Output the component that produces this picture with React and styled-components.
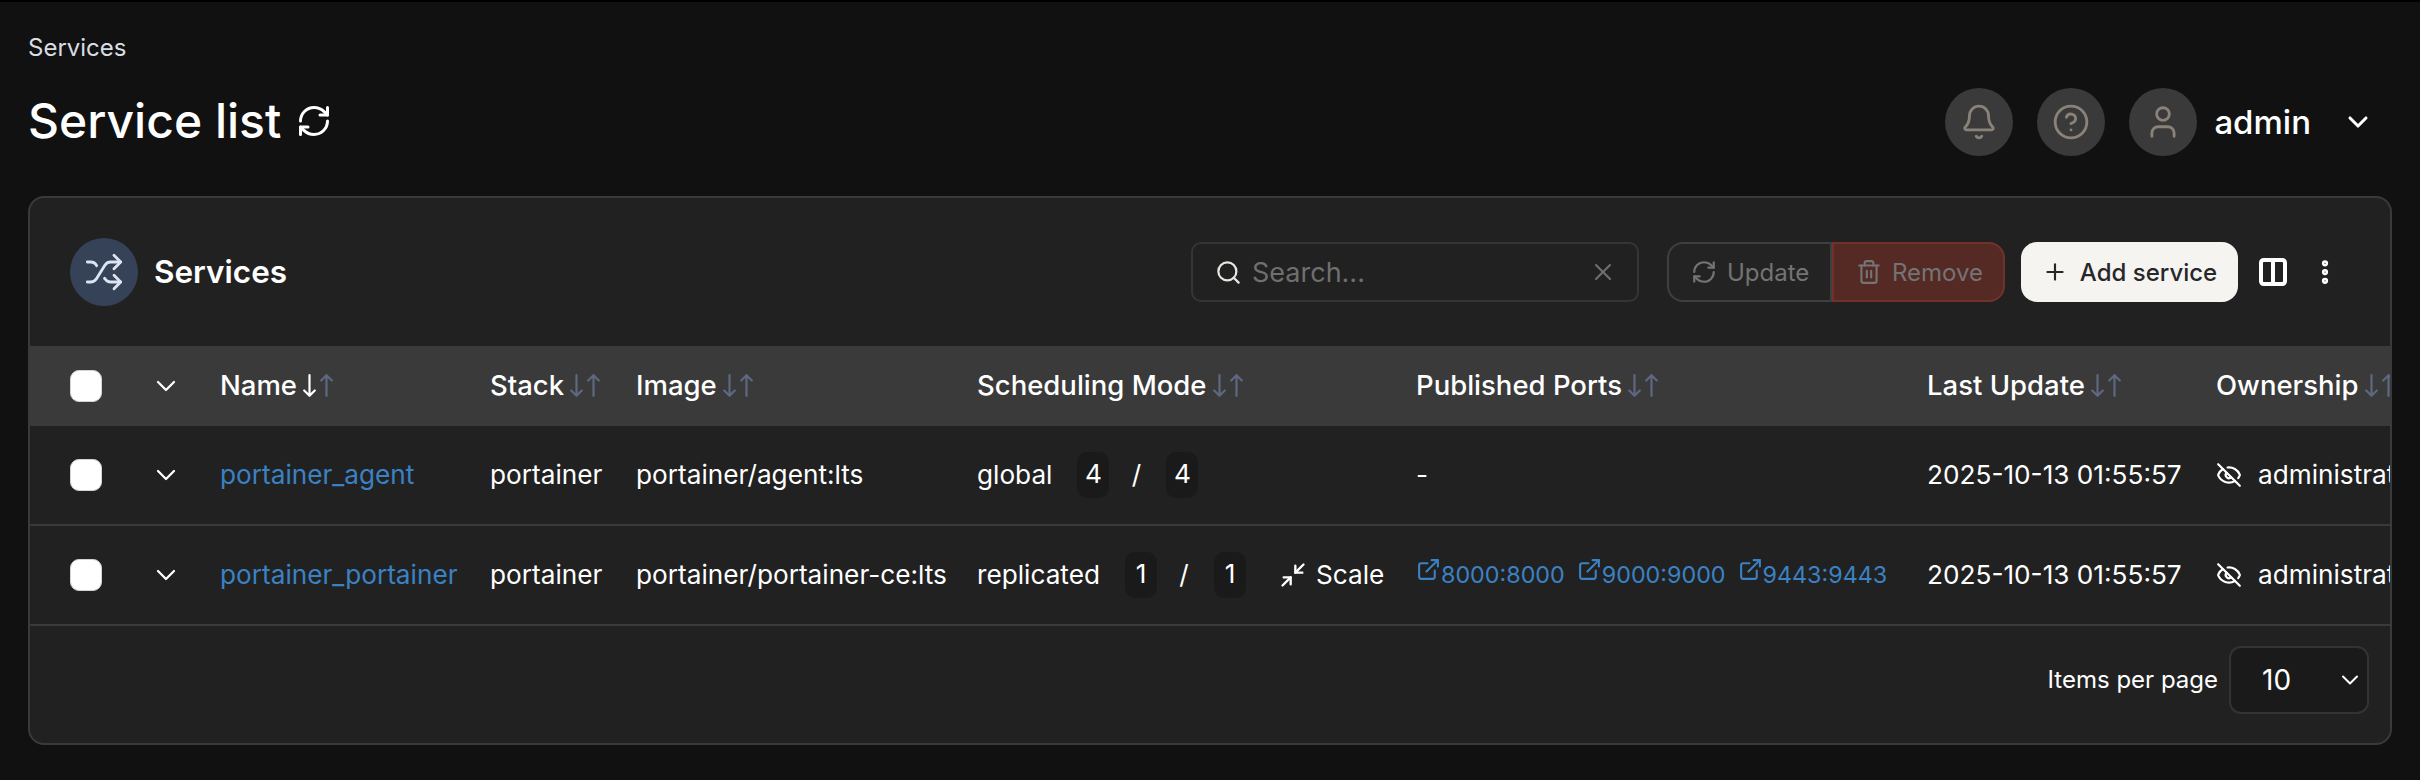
import React from 'react';
import styled, { createGlobalStyle } from 'styled-components';
import {
  Bell, ChevronDown, CircleHelp, Columns2, EllipsisVertical, ExternalLink,
  EyeOff, Minimize2, Plus, RefreshCw, Search, Shuffle, Trash2, User, X,
} from 'lucide-react';

const GlobalStyle = createGlobalStyle`
  html, body { margin: 0; padding: 0; background: #111111; }
  * { box-sizing: border-box; }
  body { font-family: Inter, "Noto Sans", sans-serif; color: #fff; -webkit-font-smoothing: antialiased; }
`;

const Page = styled.div`
  width: 2420px;
  height: 780px;
  overflow: hidden;
  background: #111111;
  border-top: 2px solid #000;
  padding: 0 28px;
`;

const TopBar = styled.header`
  display: flex;
  justify-content: space-between;
  height: 194px;
`;

const TitleBlock = styled.div`
  padding-top: 33px;
`;

const Breadcrumb = styled.div`
  font-size: 24px;
  line-height: 26px;
  color: #d9dde3;
`;

const TitleRow = styled.div`
  display: flex;
  align-items: center;
  gap: 15px;
  margin-top: 33px;
  height: 54px;
`;

const PageTitle = styled.h1`
  margin: 0;
  font-size: 48px;
  line-height: 54px;
  font-weight: 500;
`;

const UserBar = styled.div`
  display: flex;
  align-items: center;
  height: 68px;
  margin-top: 86px;
  padding-right: 18px;
`;

const RoundButton = styled.div`
  width: 68px;
  height: 68px;
  border-radius: 50%;
  background: #3a3a3a;
  color: #8a8278;
  display: flex;
  align-items: center;
  justify-content: center;
  margin-right: ${(p) => p.$gap}px;
`;

const UserName = styled.span`
  font-size: 33px;
  font-weight: 500;
  margin-right: 31px;
`;

const Card = styled.section`
  height: 549px;
  background: #212121;
  border: 2px solid #3a3a3a;
  border-radius: 16px;
  overflow: hidden;
`;

const CardHeader = styled.div`
  height: 148px;
  display: flex;
  align-items: center;
  padding: 0 50px 0 40px;
`;

const CardIcon = styled.div`
  width: 68px;
  height: 68px;
  border-radius: 50%;
  background: #354258;
  color: #dbe4f0;
  display: flex;
  align-items: center;
  justify-content: center;
`;

const CardTitle = styled.h2`
  margin: 0 0 2px 16px;
  font-size: 31.5px;
  font-weight: 600;
`;

const Actions = styled.div`
  margin-left: auto;
  display: flex;
  align-items: center;
`;

const SearchBox = styled.div`
  width: 448px;
  height: 60px;
  border: 2px solid #353535;
  border-radius: 10px;
  display: flex;
  align-items: center;
  padding: 0 20px 0 22px;
  color: #6f6f6f;
  font-size: 27px;
`;

const SearchIcon = styled(Search)`
  color: #e8e6e1;
  margin-right: 10px;
`;

const SearchText = styled.span`
  flex: 1;
`;

const ActionGroup = styled.div`
  display: flex;
  margin-left: 28px;
  height: 60px;
`;

const GroupButton = styled.div`
  display: flex;
  align-items: center;
  gap: 10px;
  height: 60px;
  font-size: 24px;
  color: #747474;
  width: ${(p) => p.$w}px;
  padding-left: ${(p) => p.$pl}px;
  border: 2px solid ${(p) => (p.$danger ? '#733229' : '#3f3f3f')};
  background: ${(p) => (p.$danger ? '#552a25' : '#232323')};
  border-radius: ${(p) => (p.$danger ? '0 16px 16px 0' : '16px 0 0 16px')};
`;

const AddButton = styled.div`
  width: 217px;
  height: 60px;
  margin-left: 16px;
  border-radius: 16px;
  background: #f5f4f1;
  color: #27272a;
  display: flex;
  align-items: center;
  justify-content: center;
  gap: 12px;
  font-size: 24px;
  font-weight: 500;
`;

const ColumnsIcon = styled(Columns2)`
  margin-left: 19px;
  color: #fff;
`;

const DotsIcon = styled(EllipsisVertical)`
  margin-left: 21px;
  color: #fff;
`;

const TableWrap = styled.div`
  overflow: hidden;
`;

const Table = styled.table`
  table-layout: fixed;
  border-collapse: separate;
  border-spacing: 0;
  width: 2500px;
  font-size: 26.2px;
`;

const Th = styled.th`
  height: 80px;
  background: #3a3a3a;
  font-size: 27.5px;
  font-weight: 500;
  text-align: left;
  padding: 0;
  white-space: nowrap;
`;

const Td = styled.td`
  height: 100px;
  padding: 0 0 1px;
  white-space: nowrap;
  border-bottom: 2px solid #3a3a3a;
`;

const HeadLabel = styled.span`
  display: inline-flex;
  align-items: center;
  color: #fff;
  padding-bottom: 2px;
`;

const Check = styled.div`
  width: 32px;
  height: 32px;
  margin-left: 40px;
  background: #fff;
  border: 1px solid #cfd4dc;
  border-radius: 9px;
`;

const Expand = styled(ChevronDown)`
  display: block;
  color: #fff;
`;

const SortSvg = styled.svg`
  flex: none;
  margin-left: ${(p) => p.$ml}px;
  color: ${(p) => (p.$active ? '#fff' : '#5e6880')};
`;

function SortDownIcon({ active }) {
  return (
    <SortSvg $ml={6} $active={active} width="13" height="23" viewBox="0 0 13 23" fill="none" stroke="currentColor" strokeWidth="2.2" strokeLinecap="round" strokeLinejoin="round">
      <path d="M6.5 1.2V21.8M1.2 16.5L6.5 21.8L11.8 16.5" />
    </SortSvg>
  );
}

function SortUpIcon() {
  return (
    <SortSvg $ml={4} width="13" height="23" viewBox="0 0 13 23" fill="none" stroke="currentColor" strokeWidth="2.2" strokeLinecap="round" strokeLinejoin="round">
      <path d="M6.5 21.8V1.2M1.2 6.5L6.5 1.2L11.8 6.5" />
    </SortSvg>
  );
}

const NameLink = styled.a`
  color: #3b82c4;
`;

const Sched = styled.div`
  display: flex;
  align-items: center;
`;

const Mode = styled.span`
  margin-right: 25px;
`;

const Badge = styled.span`
  width: 32px;
  height: 46px;
  padding-bottom: 3px;
  border-radius: 10px;
  background: #1a1a1a;
  display: flex;
  align-items: center;
  justify-content: center;
`;

const Slash = styled.span`
  width: 57px;
  padding-right: 3px;
  text-align: center;
`;

const ScaleLink = styled.span`
  display: inline-flex;
  align-items: center;
  gap: 9px;
  margin-left: 33px;
`;

const Ports = styled.div`
  display: flex;
  align-items: center;
  gap: 12px;
`;

const Port = styled.a`
  display: inline-flex;
  align-items: flex-start;
  color: #3b82c4;
  font-size: 23.3px;
`;

const PortIcon = styled(ExternalLink)`
  margin-top: -3px;
`;

const Own = styled.div`
  display: flex;
  align-items: center;
  gap: 16px;
`;

const Footer = styled.div`
  height: 117px;
  display: flex;
  align-items: center;
  justify-content: flex-end;
  padding-right: 21px;
  padding-bottom: 10px;
`;

const FooterLabel = styled.span`
  font-size: 24px;
  margin-right: 11px;
`;

const PageSelect = styled.div`
  width: 140px;
  height: 68px;
  background: #1a1a1a;
  border: 2px solid #333;
  border-radius: 12px;
  display: flex;
  align-items: center;
  justify-content: space-between;
  padding: 0 3px 0 31px;
  font-size: 28px;
`;

const headers = [
  ['Name', true], ['Stack'], ['Image'], ['Scheduling Mode'], ['Published Ports'], ['Last Update'], ['Ownership'],
];
const widths = [120, 70, 270, 146, 341, 439, 511, 289, 314];

function Row({ name, image, mode, a, b, scale, ports }) {
  return (
    <tr>
      <Td><Check /></Td>
      <Td><Expand size={32} strokeWidth={1.7} /></Td>
      <Td><NameLink>{name}</NameLink></Td>
      <Td>portainer</Td>
      <Td>{image}</Td>
      <Td>
        <Sched>
          <Mode>{mode}</Mode>
          <Badge>{a}</Badge>
          <Slash>/</Slash>
          <Badge>{b}</Badge>
          {scale && (
            <ScaleLink><Minimize2 size={28} strokeWidth={2} />Scale</ScaleLink>
          )}
        </Sched>
      </Td>
      <Td>
        {ports ? (
          <Ports>
            {ports.map((p) => (
              <Port key={p}><PortIcon size={25} strokeWidth={2} />{p}</Port>
            ))}
          </Ports>
        ) : '-'}
      </Td>
      <Td>2025-10-13 01:55:57</Td>
      <Td>
        <Own><EyeOff size={26} strokeWidth={2} />administrators</Own>
      </Td>
    </tr>
  );
}

export default function App() {
  return (
    <Page>
      <GlobalStyle />
      <TopBar>
        <TitleBlock>
          <Breadcrumb>Services</Breadcrumb>
          <TitleRow>
            <PageTitle>Service list</PageTitle>
            <RefreshCw size={36} strokeWidth={2} />
          </TitleRow>
        </TitleBlock>
        <UserBar>
          <RoundButton $gap={24}><Bell size={38} strokeWidth={1.8} /></RoundButton>
          <RoundButton $gap={24}><CircleHelp size={38} strokeWidth={1.8} /></RoundButton>
          <RoundButton $gap={17}><User size={38} strokeWidth={1.8} /></RoundButton>
          <UserName>admin</UserName>
          <ChevronDown size={32} strokeWidth={2.3} />
        </UserBar>
      </TopBar>
      <Card>
        <CardHeader>
          <CardIcon><Shuffle size={40} strokeWidth={1.7} /></CardIcon>
          <CardTitle>Services</CardTitle>
          <Actions>
            <SearchBox>
              <SearchIcon size={27} strokeWidth={2} />
              <SearchText>Search...</SearchText>
              <X size={28} strokeWidth={1.8} />
            </SearchBox>
            <ActionGroup>
              <GroupButton $w={165} $pl={22}><RefreshCw size={26} strokeWidth={2} />Update</GroupButton>
              <GroupButton $danger $w={173} $pl={22}><Trash2 size={26} strokeWidth={2} />Remove</GroupButton>
            </ActionGroup>
            <AddButton><Plus size={26} strokeWidth={2} />Add service</AddButton>
            <ColumnsIcon size={32} strokeWidth={3} />
            <DotsIcon size={30} strokeWidth={3} />
          </Actions>
        </CardHeader>
        <TableWrap>
          <Table>
            <colgroup>
              {widths.map((w, i) => <col key={i} style={{ width: w }} />)}
            </colgroup>
            <thead>
              <tr>
                <Th><Check /></Th>
                <Th><Expand size={32} strokeWidth={1.7} /></Th>
                {headers.map(([label, active]) => (
                  <Th key={label}>
                    <HeadLabel>
                      {label}
                      <SortDownIcon active={active} />
                      <SortUpIcon />
                    </HeadLabel>
                  </Th>
                ))}
              </tr>
            </thead>
            <tbody>
              <Row name="portainer_agent" image="portainer/agent:lts" mode="global" a="4" b="4" />
              <Row
                name="portainer_portainer"
                image="portainer/portainer-ce:lts"
                mode="replicated"
                a="1"
                b="1"
                scale
                ports={['8000:8000', '9000:9000', '9443:9443']}
              />
            </tbody>
          </Table>
        </TableWrap>
        <Footer>
          <FooterLabel>Items per page</FooterLabel>
          <PageSelect>10<ChevronDown size={28} strokeWidth={1.7} /></PageSelect>
        </Footer>
      </Card>
    </Page>
  );
}
